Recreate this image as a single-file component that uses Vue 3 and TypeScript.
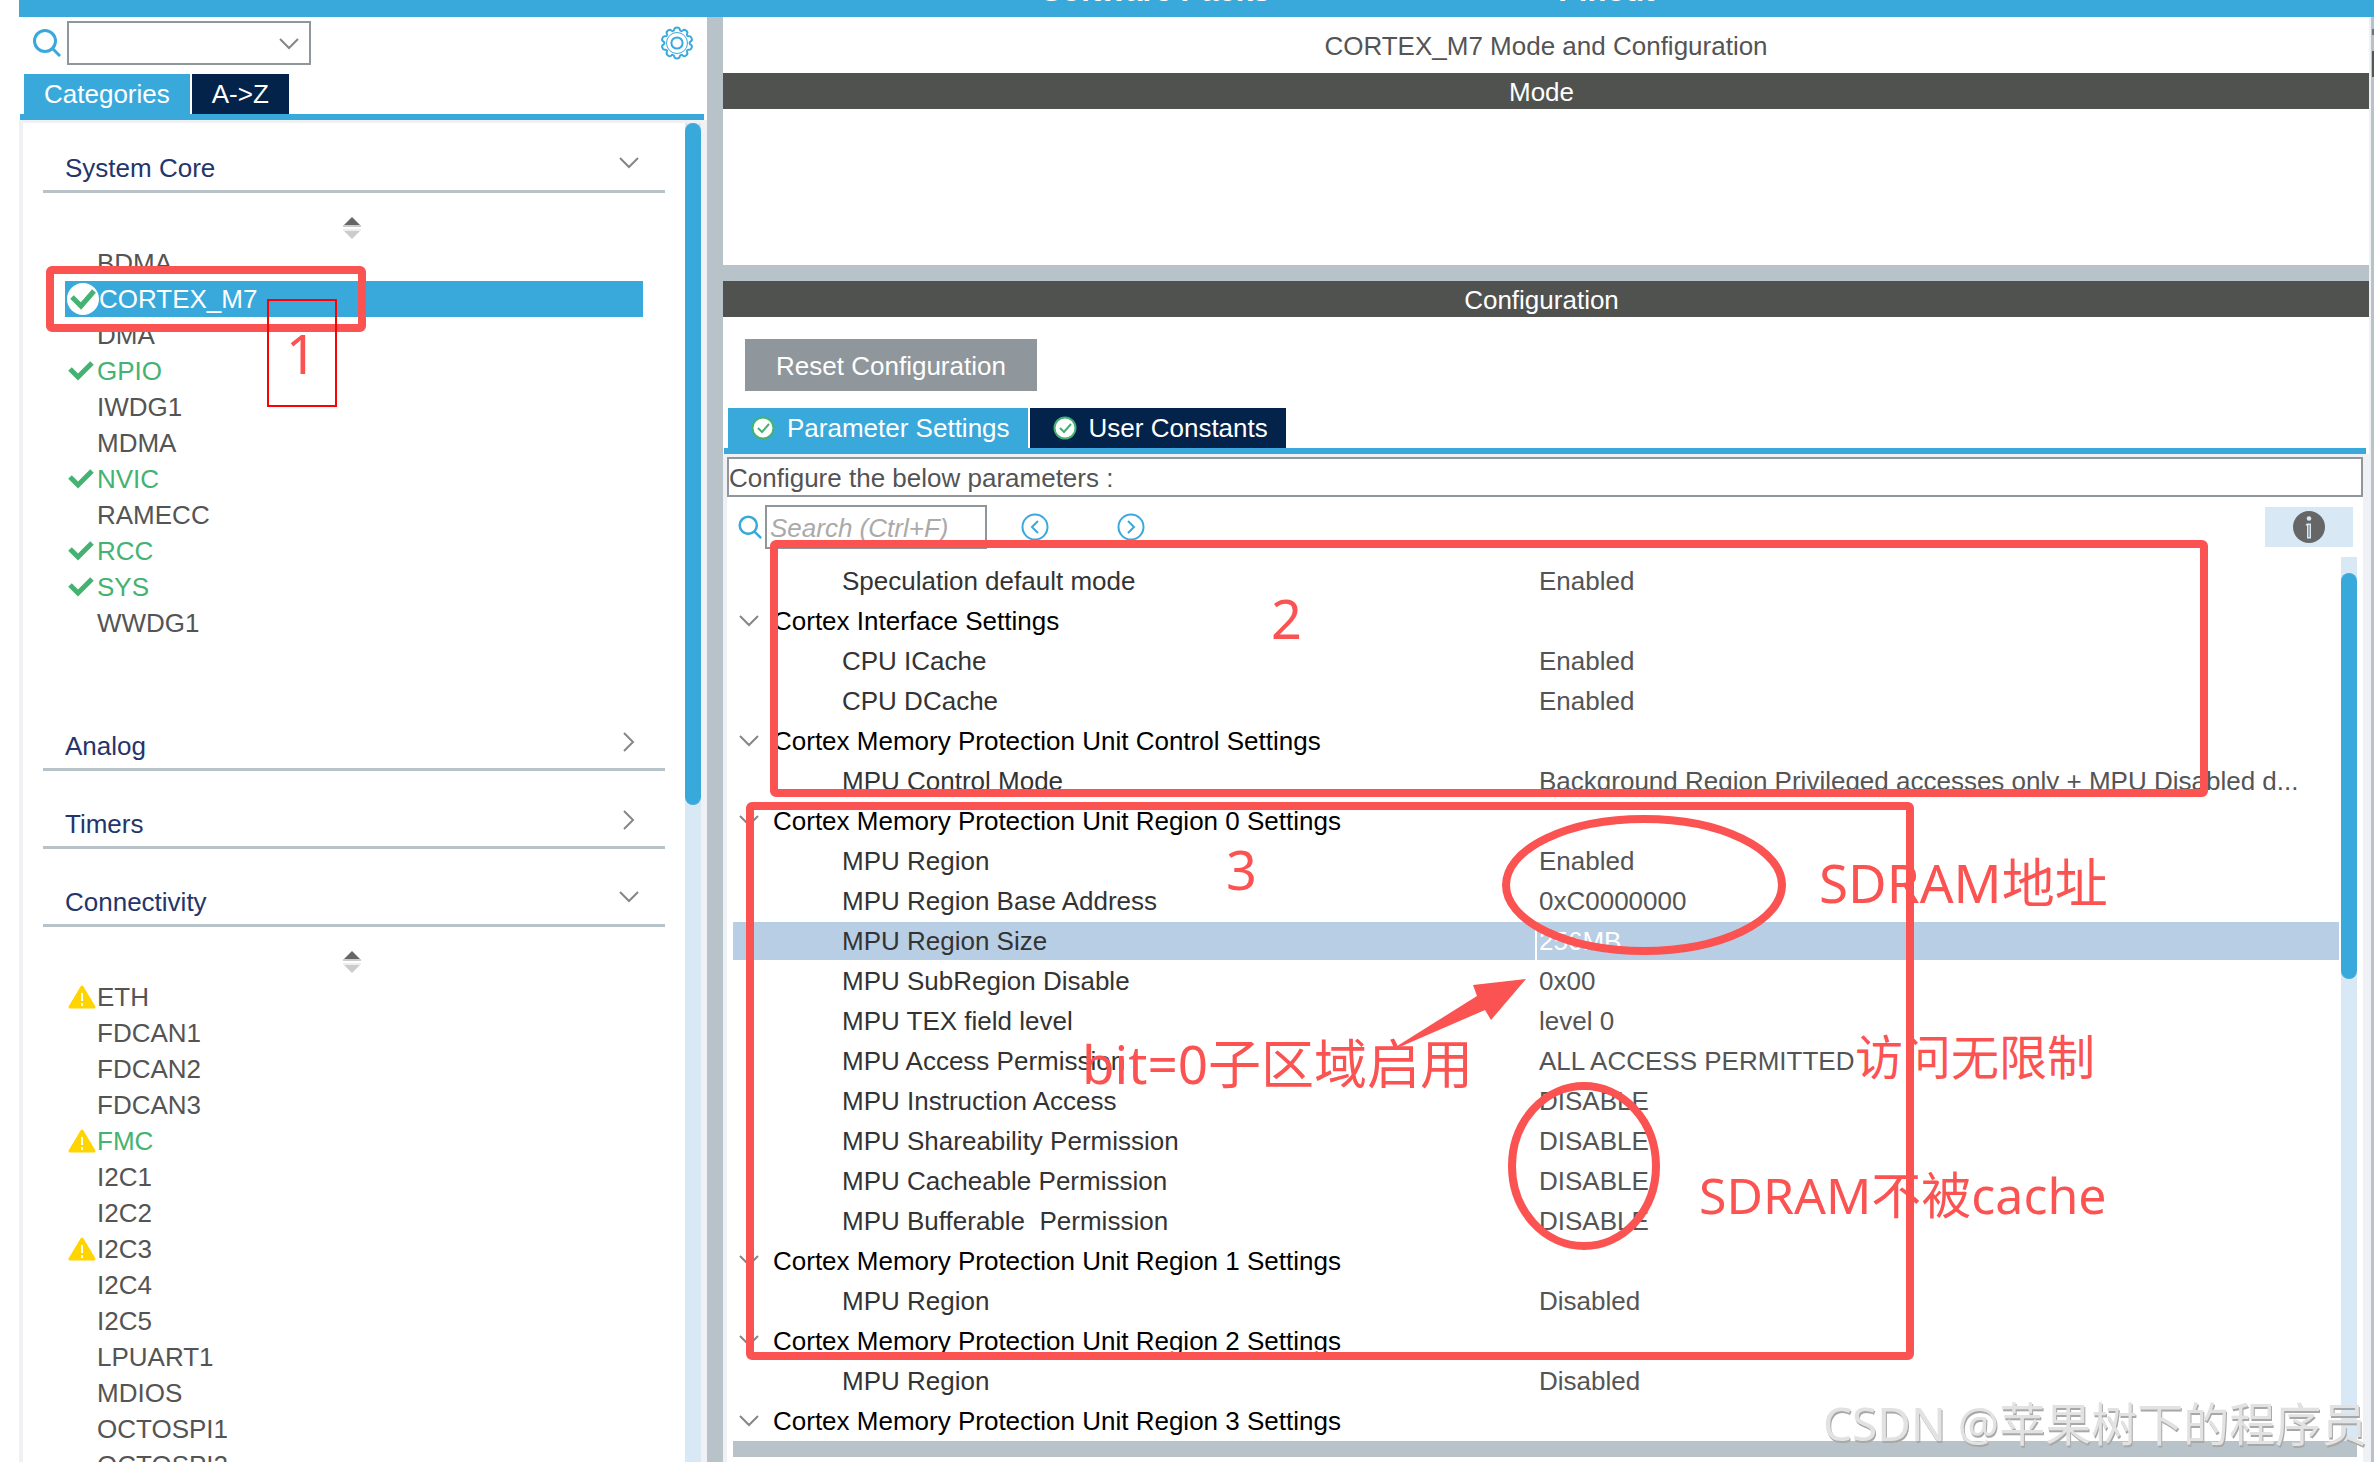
<script setup lang="ts">
import { ref } from 'vue'

type Mark = 'check' | 'badge' | 'warn'
interface Item { name: string; mark?: Mark; on?: boolean; selected?: boolean }
interface Category { title: string; open: boolean; items: Item[] }
interface Row { name: string; value?: string; group?: boolean; selected?: boolean }

const categories: Category[] = [
  {
    title: 'System Core',
    open: true,
    items: [
      { name: 'BDMA' },
      { name: 'CORTEX_M7', mark: 'badge', selected: true },
      { name: 'DMA' },
      { name: 'GPIO', mark: 'check', on: true },
      { name: 'IWDG1' },
      { name: 'MDMA' },
      { name: 'NVIC', mark: 'check', on: true },
      { name: 'RAMECC' },
      { name: 'RCC', mark: 'check', on: true },
      { name: 'SYS', mark: 'check', on: true },
      { name: 'WWDG1' },
    ],
  },
  { title: 'Analog', open: false, items: [] },
  { title: 'Timers', open: false, items: [] },
  {
    title: 'Connectivity',
    open: true,
    items: [
      { name: 'ETH', mark: 'warn' },
      { name: 'FDCAN1' },
      { name: 'FDCAN2' },
      { name: 'FDCAN3' },
      { name: 'FMC', mark: 'warn', on: true },
      { name: 'I2C1' },
      { name: 'I2C2' },
      { name: 'I2C3', mark: 'warn' },
      { name: 'I2C4' },
      { name: 'I2C5' },
      { name: 'LPUART1' },
      { name: 'MDIOS' },
      { name: 'OCTOSPI1' },
      { name: 'OCTOSPI2' },
    ],
  },
]

const rows: Row[] = [
  { name: 'Speculation default mode', value: 'Enabled' },
  { name: 'Cortex Interface Settings', group: true },
  { name: 'CPU ICache', value: 'Enabled' },
  { name: 'CPU DCache', value: 'Enabled' },
  { name: 'Cortex Memory Protection Unit Control Settings', group: true },
  { name: 'MPU Control Mode', value: 'Background Region Privileged accesses only + MPU Disabled d...' },
  { name: 'Cortex Memory Protection Unit Region 0 Settings', group: true },
  { name: 'MPU Region', value: 'Enabled' },
  { name: 'MPU Region Base Address', value: '0xC0000000' },
  { name: 'MPU Region Size', value: '256MB', selected: true },
  { name: 'MPU SubRegion Disable', value: '0x00' },
  { name: 'MPU TEX field level', value: 'level 0' },
  { name: 'MPU Access Permission', value: 'ALL ACCESS PERMITTED' },
  { name: 'MPU Instruction Access', value: 'DISABLE' },
  { name: 'MPU Shareability Permission', value: 'DISABLE' },
  { name: 'MPU Cacheable Permission', value: 'DISABLE' },
  { name: 'MPU Bufferable  Permission', value: 'DISABLE' },
  { name: 'Cortex Memory Protection Unit Region 1 Settings', group: true },
  { name: 'MPU Region', value: 'Disabled' },
  { name: 'Cortex Memory Protection Unit Region 2 Settings', group: true },
  { name: 'MPU Region', value: 'Disabled' },
  { name: 'Cortex Memory Protection Unit Region 3 Settings', group: true },
]

const finder = ref('')
const search = ref('')
const gearTeeth = Array.from({ length: 10 }, (_, i) => i * 36)
</script>

<template>
  <div class="app">
    <header class="topbar">
      <a href="#" class="toplink packs">Software Packs</a>
      <a href="#" class="toplink pinout">Pinout</a>
    </header>

    <div class="body">
      <aside class="sidebar">
        <div class="finder">
          <svg class="lens" viewBox="0 0 28 28" width="28" height="28" aria-hidden="true">
            <circle cx="12" cy="12" r="10.5" /><path d="M19 19l8 8" />
          </svg>
          <div class="combo">
            <select v-model="finder" aria-label="Find peripheral"><option value=""></option></select>
            <svg class="chev" viewBox="0 0 20 12" width="20" height="12" aria-hidden="true"><path d="M1 1l9 9 9-9" /></svg>
          </div>
          <button class="gear" aria-label="Settings">
            <svg viewBox="-17 -17 34 34" width="34" height="34">
              <path
                v-for="a in gearTeeth" :key="a" :transform="`rotate(${a})`"
                d="M-3.9 -11.9 Q-2.9 -12.3 -2.7 -13.6 Q-2.4 -15.4 0 -15.4 Q2.4 -15.4 2.7 -13.6 Q2.9 -12.3 3.9 -11.9"
              />
              <circle r="10.5" class="faint" /><circle r="5.6" />
            </svg>
          </button>
        </div>
        <div class="tabs side-tabs" role="tablist">
          <button class="tab active" role="tab" aria-selected="true">Categories</button>
          <button class="tab" role="tab" aria-selected="false">A-&gt;Z</button>
        </div>

        <div class="tree">
          <nav class="cats">
            <section v-for="c in categories" :key="c.title" class="cat">
              <button class="cat-head" :aria-expanded="c.open">
                <span>{{ c.title }}</span>
                <svg v-if="c.open" class="chev" viewBox="0 0 20 12" width="20" height="12" aria-hidden="true"><path d="M1 1l9 9 9-9" /></svg>
                <svg v-else class="chev side" viewBox="0 0 12 20" width="12" height="20" aria-hidden="true"><path d="M1 1l9 9-9 9" /></svg>
              </button>
              <div v-if="c.open" class="cat-body">
                <svg class="sort" viewBox="0 0 18 22" width="18" height="22" aria-hidden="true">
                  <path d="M9 0l8 8H1z" fill="#666" /><path d="M0 8h18v2H0z" fill="#ccc" />
                  <path d="M9 22l8-8H1z" fill="#ccc" /><path d="M0 12h18v2H0z" fill="#eee" />
                </svg>
                <ul>
                  <li v-for="it in c.items" :key="it.name">
                    <button class="item" :class="{ on: it.on, selected: it.selected }">
                      <span class="mark">
                        <svg v-if="it.mark === 'check'" viewBox="0 0 32 32" width="32" height="32" aria-hidden="true">
                          <path d="M5 14l8 8 14-14" class="tick" />
                        </svg>
                        <svg v-else-if="it.mark === 'badge'" viewBox="0 0 32 32" width="32" height="32" aria-hidden="true">
                          <circle cx="16" cy="16" r="16" fill="#fff" /><path d="M5 14l9 9 13-15" class="tick" />
                        </svg>
                        <svg v-else-if="it.mark === 'warn'" viewBox="0 0 32 32" width="32" height="32" aria-hidden="true">
                          <path d="M17 6l12 20H5z" fill="#ffd400" stroke="#ffd400" stroke-width="3" stroke-linejoin="round" />
                          <path d="M17 12v8M17 22v3" stroke="#fff" stroke-width="2" />
                        </svg>
                      </span>
                      <span>{{ it.name }}</span>
                    </button>
                  </li>
                </ul>
              </div>
            </section>
          </nav>
          <div class="track"><div class="thumb side-thumb"></div></div>
        </div>
      </aside>

      <div class="divider"></div>

      <main class="main">
        <h1>CORTEX_M7 Mode and Configuration</h1>
        <h2>Mode</h2>
        <div class="mode-area"></div>
        <div class="hsplit"></div>
        <h2>Configuration</h2>
        <div class="actions"><button class="reset">Reset Configuration</button></div>
        <div class="tabs main-tabs" role="tablist">
          <button class="tab active" role="tab" aria-selected="true">
            <svg viewBox="0 0 24 24" width="24" height="24" aria-hidden="true"><circle cx="12" cy="12" r="10.5" class="ok" /><path d="M7 12l4 4 7-8" class="okt" /></svg>
            Parameter Settings
          </button>
          <button class="tab" role="tab" aria-selected="false">
            <svg viewBox="0 0 24 24" width="24" height="24" aria-hidden="true"><circle cx="12" cy="12" r="10.5" class="ok" /><path d="M7 12l4 4 7-8" class="okt" /></svg>
            User Constants
          </button>
        </div>
        <div class="params">
          <p class="hint">Configure the below parameters :</p>
          <div class="searchbar">
            <svg class="lens" viewBox="0 0 28 28" width="24" height="24" aria-hidden="true">
              <circle cx="12" cy="12" r="10" /><path d="M19 19l8 8" />
            </svg>
            <input v-model="search" type="text" placeholder="Search (Ctrl+F)" aria-label="Search parameters">
            <button class="step" aria-label="Previous match">
              <svg viewBox="0 0 28 28" width="28" height="28"><circle cx="14" cy="14" r="12.5" /><path d="M17 8l-6 6 6 6" /></svg>
            </button>
            <button class="step" aria-label="Next match">
              <svg viewBox="0 0 28 28" width="28" height="28"><circle cx="14" cy="14" r="12.5" /><path d="M11 8l6 6-6 6" /></svg>
            </button>
            <button class="info" aria-label="Show description">
              <svg viewBox="0 0 32 32" width="32" height="32">
                <circle cx="16" cy="16" r="16" fill="#666" />
                <circle cx="16" cy="7.5" r="2.3" fill="#d8e8f5" />
                <path d="M13.500 12.500h4.500v15h-4v-13h-1.500z" fill="#d8e8f5" /><path d="M16 14v12" stroke="#666" stroke-width="1" />
              </svg>
            </button>
          </div>
          <div class="grid">
            <table>
              <tbody>
                <tr v-for="(r, i) in rows" :key="i" :class="{ group: r.group, selected: r.selected }">
                  <template v-if="r.group">
                    <th colspan="2" scope="rowgroup">
                      <svg class="chev" viewBox="0 0 20 12" width="20" height="12" aria-hidden="true"><path d="M1 1l9 9 9-9" /></svg>{{ r.name }}
                    </th>
                  </template>
                  <template v-else>
                    <td class="name">{{ r.name }}</td>
                    <td class="value">{{ r.value }}</td>
                  </template>
                </tr>
              </tbody>
            </table>
            <div class="track"><div class="thumb grid-thumb"></div></div>
          </div>
          <div class="foot"></div>
        </div>
      </main>
      <div class="edge"><i class="dot"></i><i class="bar"></i></div>
    </div>

    <!-- Hand-drawn notes laid over the window -->
    <svg class="notes" width="2374" height="1462" viewBox="0 0 2374 1462">
      <g class="pen">
        <rect x="50" y="270" width="312" height="58" rx="2" />
        <rect x="774" y="544" width="1430" height="249" rx="2" />
        <rect x="750" y="806" width="1160" height="550" rx="2" />
        <ellipse cx="1644" cy="885" rx="138" ry="66" />
        <ellipse cx="1584" cy="1166" rx="72" ry="80" />
      </g>
      <rect x="268" y="300" width="68" height="106" fill="none" stroke="#ff0000" stroke-width="2" />
      <path d="M1526 979L1473 985L1477 996L1394 1048L1402 1046L1485 1010L1491 1020Z" class="ink" />
      <g class="ink">
        <text x="286" y="374" font-size="54">1</text>
        <text x="1271" y="639" font-size="54">2</text>
        <text x="1226" y="890" font-size="54">3</text>
        <text x="1819" y="903" font-size="53">SDRAM地址</text>
        <text x="1082" y="1084" font-size="53">bit=0子区域启用</text>
        <text x="1855" y="1075" font-size="48">访问无限制</text>
        <text x="1699" y="1214" font-size="50">SDRAM不被cache</text>
      </g>
      <text class="mark-text" x="1823" y="1441" font-size="46">CSDN @苹果树下的程序员</text>
    </svg>
  </div>
</template>

<style>
body { margin: 0; overflow: hidden; }
</style>

<style scoped>
.app {
  position: relative;
  display: flex;
  flex-direction: column;
  height: 100vh;
  overflow: hidden;
  background: #fff;
  color: #545454;
  font: 26px/36px "Liberation Sans", Arial, sans-serif;
}
.app * { box-sizing: border-box; }
button, input, select {
  margin: 0;
  padding: 0;
  border: 0;
  border-radius: 0;
  background: none;
  color: inherit;
  font: inherit;
}
.topbar {
  display: flex;
  flex: none;
  align-items: flex-end;
  height: 17px;
  margin-left: 19px;
  overflow: hidden;
  background: #39a9dc;
}
.toplink {
  margin-bottom: 8px;
  color: #fff;
  font-size: 31px;
  font-weight: bold;
  text-decoration: none;
  white-space: nowrap;
}
.packs { margin-left: 1022px; }
.pinout { margin-left: 288px; }
.body { display: flex; flex: 1; min-height: 0; }

.sidebar { display: flex; flex: none; flex-direction: column; width: 688px; margin-left: 19px; }
.finder { display: flex; flex: none; align-items: center; height: 57px; padding: 0 13px 5px 14px; }
.lens, .gear svg, .step svg { fill: none; stroke: #39a9dc; stroke-width: 3; }
.combo { position: relative; width: 244px; height: 44px; margin-left: 6px; }
.combo select { width: 100%; height: 100%; border: 2px solid #8f979c; appearance: none; background: #fff; }
.combo .chev { position: absolute; top: 17px; right: 12px; pointer-events: none; }
.chev { fill: none; stroke: #868686; stroke-width: 2; }
.gear { display: flex; margin-left: auto; }
.gear svg { stroke-width: 2; }
.gear .faint { stroke-width: 1; }

.tabs { display: flex; flex: none; gap: 2px; height: 46px; border-bottom: 6px solid #39a9dc; }
.side-tabs { margin: 0 3px 0 1px; padding-left: 4px; }
.tab { display: flex; align-items: center; padding: 0 20px; background: #03234b; color: #fff; white-space: nowrap; }
.tab.active { background: #39a9dc; }
.tree { display: flex; flex: 1; min-height: 0; border: solid #f0f1f4; border-width: 3px 6px 0 4px; }
.cats { flex: 1; padding: 0 20px; overflow: hidden; }
.track { flex: none; width: 16px; background: #d8e8f5; }
.thumb { border-radius: 8px; background: #39a9dc; }
.side-thumb { height: 682px; }
.cat-head {
  display: flex;
  align-items: flex-end;
  justify-content: space-between;
  width: 100%;
  height: 78px;
  padding: 0 26px 4px 22px;
  border-bottom: 3px solid #b8c3c9;
  color: #24356b;
  text-align: left;
}
.cat:first-child .cat-head { height: 70px; }
.cat-head .chev { margin-bottom: 17px; }
.cat-head .chev.side { margin: 0 4px 12px 0; }
.cat-body { padding-top: 24px; }
.sort { display: block; margin-left: 300px; }
.cat-body ul { margin: 0; padding: 6px 22px 52px; list-style: none; }
.item { display: flex; align-items: center; width: 100%; height: 36px; text-align: left; }
.mark { display: flex; width: 32px; height: 32px; }
.item .tick { fill: none; stroke: #44b271; stroke-width: 5; }
.item.on { color: #44b271; }
.item.selected { padding-left: 2px; background: #39a9dc; color: #fff; }

.divider { flex: none; width: 16px; background: #b8c3c9; }
.main { display: flex; flex: 1; flex-direction: column; min-width: 0; }
h1, h2 { flex: none; margin: 0; font-size: 26px; font-weight: normal; text-align: center; }
h1 { height: 56px; padding-top: 11px; }
h2 { height: 36px; padding-right: 9px; background: #505250; color: #fff; line-height: 38px; }
.mode-area { flex: none; height: 156px; }
.hsplit { flex: none; height: 16px; background: #b8c3c9; }
.actions { flex: none; padding: 22px 22px 17px; }
.reset { display: block; width: 292px; height: 52px; padding-top: 2px; background: #8f979c; color: #fff; }
.main-tabs { margin: 0 3px 0 1px; padding-left: 4px; }
.main-tabs .tab { gap: 12px; padding: 0 18px 0 23px; }
.ok { fill: #fff; stroke: #44b271; stroke-width: 2; }
.okt { fill: none; stroke: #44b271; stroke-width: 2; }
.params {
  display: flex;
  flex: 1;
  flex-direction: column;
  min-height: 0;
  border: solid #f0f1f4;
  border-width: 3px 6px 0 4px;
}
.hint { flex: none; height: 40px; margin: 0; border: 2px solid #8f979c; line-height: 38px; }
.searchbar { display: flex; flex: none; align-items: center; height: 60px; padding: 0 10px 0 11px; }
.searchbar input { width: 222px; height: 44px; margin: 0 34px 0 3px; padding: 2px 3px 0; border: 2px solid #8f979c; }
.searchbar input::placeholder { color: #aaa; font-style: italic; opacity: 1; }
.step { display: flex; margin-right: 68px; }
.step svg { stroke-width: 2; }
.info { display: flex; align-items: center; justify-content: center; width: 88px; height: 40px; margin-left: auto; background: #d8e8f5; }
.grid { display: flex; flex: 1; min-height: 0; padding: 0 6px; overflow: hidden; }
.grid .track { padding-top: 16px; margin-left: 2px; }
.grid-thumb { height: 406px; }
table { flex: 1; height: 0; margin-top: 4px; border-collapse: collapse; table-layout: fixed; }
tr { height: 40px; }
td, th { height: 40px; padding: 0; border-bottom: 2px solid #fff; font-weight: normal; text-align: left; white-space: pre; line-height: 38px; }
th { padding-left: 6px; color: #000; }
th .chev { margin-right: 14px; vertical-align: 3px; }
.name { width: 50%; padding-left: 109px; color: #333; }
.value { padding-left: 2px; border-left: 2px solid #fff; }
.selected td { background: #b8cee5; }
.selected .value { color: #fff; }
.foot { flex: none; height: 16px; margin: 0 6px 5px; background: #b8c3c9; }
.edge { display: flex; flex: none; flex-direction: column; width: 5px; padding: 12px 0 0 3px; background: linear-gradient(90deg, #f0f1f4 2px, #b8c3c9 2px); }
.dot { flex: none; height: 6px; background: #6d7173; }
.bar { flex: none; height: 26px; margin-top: 16px; background: #545655; }

.notes { position: absolute; top: 0; left: 0; pointer-events: none; }
.pen { fill: none; stroke: #fb5252; stroke-width: 8; }
.ink { fill: #fb5252; }
.notes text { font-family: "Noto Sans", "Noto Sans CJK SC", sans-serif; }
.mark-text { fill: #e2e2e2; filter: drop-shadow(1px 2px 0 #a8a8a8); }
</style>
